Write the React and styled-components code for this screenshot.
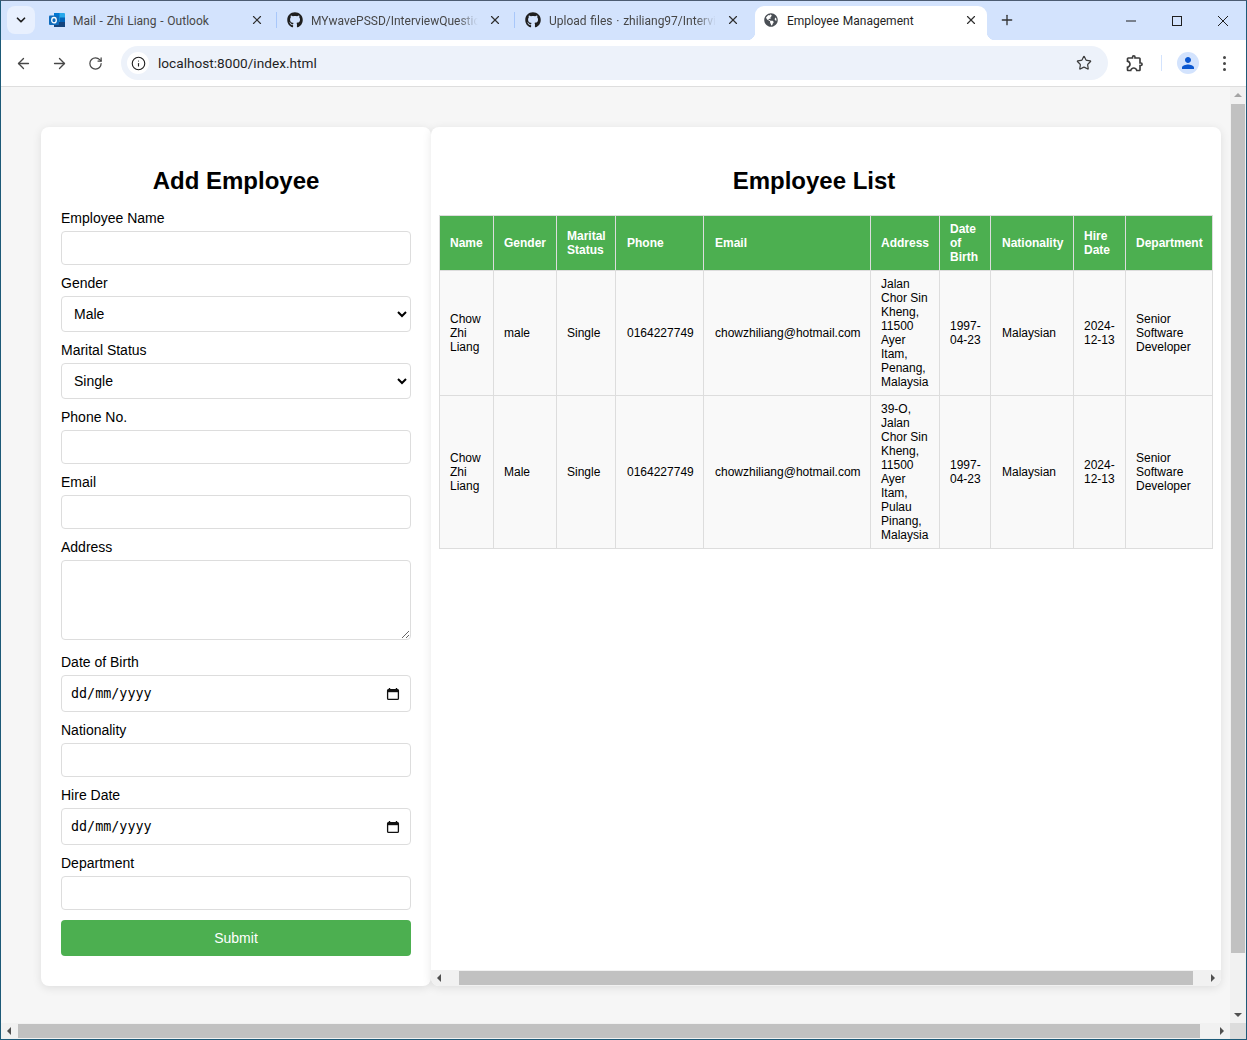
import React from 'react';
import styled, { createGlobalStyle } from 'styled-components';
import { ArrowLeft, ArrowRight, ChevronDown, Info, Plus, RotateCw, Star, X } from 'lucide-react';
import { FaGithub, FaGlobeAmericas } from 'react-icons/fa';
import { MdOutlineExtension, MdPerson } from 'react-icons/md';

const GlobalStyle = createGlobalStyle`
    html, body {
        margin: 0;
        padding: 0;
        overflow: hidden;
        background: #fff;
    }
    * {
        box-sizing: border-box;
    }
`;

const Window = styled.div`
    width: 1247px;
    height: 1040px;
    display: flex;
    flex-direction: column;
    border: 1px solid #1d5a78;
    border-top-color: #4c5c72;
    overflow: hidden;
    font-family: "Liberation Sans", Arial, sans-serif;
`;

/* browser chrome */
const TabStrip = styled.div`
    height: 39px;
    flex: none;
    display: flex;
    align-items: flex-end;
    padding-left: 6px;
    background: #d3e3fd;
    font-family: Roboto, "Noto Sans", sans-serif;
    font-size: 12px;
    word-spacing: 0.8px;
    color: #474747;
`;

const TabSearch = styled.div`
    width: 28px;
    height: 28px;
    margin: 0 6px 6px 0;
    flex: none;
    display: flex;
    align-items: center;
    justify-content: center;
    border-radius: 8px;
    background: #e8f0fe;
    color: #1f1f1f;
`;

const Tab = styled.div`
    position: relative;
    width: ${(p) => (p.$active ? '232px' : '238px')};
    margin-right: ${(p) => (p.$active ? '6px' : '0')};
    height: 34px;
    flex: none;
    display: flex;
    align-items: center;
    padding: 0 0 6px 8px;
    border-radius: 9px 9px 0 0;
    background: ${(p) => (p.$active ? '#fff' : 'transparent')};
    color: ${(p) => (p.$active ? '#1f1f1f' : '#474747')};
    &::before, &::after {
        content: ${(p) => (p.$active ? '""' : 'none')};
        position: absolute;
        bottom: 0;
        width: 8px;
        height: 8px;
    }
    &::before {
        left: -8px;
        background: radial-gradient(circle at 0 0, transparent 8px, #fff 8.5px);
    }
    &::after {
        right: -8px;
        background: radial-gradient(circle at 100% 0, transparent 8px, #fff 8.5px);
    }
`;

const TabSeparator = styled.span`
    position: absolute;
    right: 2px;
    top: 6px;
    width: 1px;
    height: 16px;
    background: #a8c7fa;
`;

const Favicon = styled.span`
    width: 16px;
    height: 16px;
    flex: none;
    display: flex;
    align-items: center;
    justify-content: center;
    color: ${(p) => p.$color || '#1f1f1f'};
`;

const TabTitle = styled.span`
    width: 184px;
    padding: 1px 0 0 8px;
    flex: none;
    white-space: nowrap;
    ${(p) => p.$fade && `
        mask-image: linear-gradient(to right, #000 84%, transparent 95%);
    `}
`;

const TabClose = styled.span`
    width: 16px;
    height: 16px;
    flex: none;
    display: flex;
    align-items: center;
    justify-content: center;
    color: #2f2f2f;
`;

const NewTab = styled.div`
    width: 28px;
    height: 28px;
    margin: 0 0 6px 0;
    flex: none;
    display: flex;
    align-items: center;
    justify-content: center;
    color: #333;
`;

const WindowControls = styled.div`
    margin-left: auto;
    height: 39px;
    display: flex;
    align-self: flex-start;
`;

const WindowControl = styled.div`
    width: 46px;
    display: flex;
    align-items: center;
    justify-content: center;
    color: #1f1f1f;
`;

const Toolbar = styled.div`
    height: 47px;
    flex: none;
    display: flex;
    align-items: center;
    padding: 0 0 0 4px;
    background: #fff;
    border-radius: 8px 8px 0 0;
    border-bottom: 1px solid #dedede;
    color: #474747;
`;

const NavButton = styled.div`
    width: 36px;
    height: 34px;
    flex: none;
    display: flex;
    align-items: center;
    justify-content: center;
`;

const AddressBar = styled.div`
    width: 987px;
    height: 34px;
    margin-left: 8px;
    flex: none;
    display: flex;
    align-items: center;
    padding: 0 8px 0 6px;
    border-radius: 17px;
    background: #edf2fa;
`;

const SiteInfo = styled.div`
    width: 22px;
    height: 22px;
    flex: none;
    display: flex;
    align-items: center;
    justify-content: center;
    border-radius: 50%;
    background: #fff;
    color: #1f1f1f;
`;

const Url = styled.span`
    margin-left: 9px;
    font-family: Roboto, "Noto Sans", sans-serif;
    font-size: 13.65px;
    color: #1f1f1f;
`;

const BarAction = styled.div`
    margin-left: auto;
    width: 32px;
    display: flex;
    align-items: center;
    justify-content: center;
    color: #3c3c3c;
`;

const ExtensionButton = styled(NavButton)`
    margin-left: 9px;
    color: #3c3c3c;
`;

const ToolbarDivider = styled.span`
    width: 1px;
    height: 16px;
    margin: 0 8px 0 8px;
    background: #d3e3fd;
`;

const Avatar = styled.div`
    width: 22px;
    height: 22px;
    margin-left: 7px;
    flex: none;
    display: flex;
    align-items: center;
    justify-content: center;
    border-radius: 50%;
    background: #d3e3fd;
    color: #0b57d0;
`;

const MenuDots = styled.div`
    margin-left: 24px;
    display: flex;
    flex-direction: column;
    gap: 3px;
    span {
        width: 3px;
        height: 3px;
        border-radius: 50%;
        background: #474747;
    }
`;

/* page */
const Viewport = styled.div`
    flex: 1;
    min-height: 0;
    display: grid;
    grid-template-columns: 1fr 16px;
    grid-template-rows: 1fr 16px;
    background: #f6f6f6;
`;

const Page = styled.div`
    min-height: 0;
    overflow: hidden;
    display: flex;
    padding: 40px 9px 37px 40px;
    color: #000;
`;

const FormCard = styled.div`
    width: 390px;
    flex: none;
    padding: 20px 20px 30px;
    background: #fff;
    border-radius: 8px;
    box-shadow: 0 2px 10px rgba(0, 0, 0, 0.1);
`;

const ListCard = styled.div`
    flex: 1;
    min-width: 0;
    display: flex;
    flex-direction: column;
    overflow: hidden;
    background: #fff;
    border-radius: 8px;
    box-shadow: 0 2px 10px rgba(0, 0, 0, 0.1);
`;

const ListBody = styled.div`
    flex: 1;
    min-height: 0;
    padding: 20px 8px 0;
`;

const Heading = styled.h2`
    margin: 20px 0 16px;
    font-size: 24px;
    line-height: 27px;
    font-weight: bold;
    text-align: center;
`;

const ListHeading = styled(Heading)`
    width: 750px;
    margin-bottom: 21px;
`;

const Field = styled.div`
    margin-bottom: 10px;
`;

const Label = styled.label`
    display: block;
    height: 16px;
    margin-bottom: 5px;
    font-size: 14px;
    line-height: 16px;
`;

const controlBase = `
    display: block;
    width: 100%;
    border: 1px solid #ddd;
    border-radius: 4px;
    background: #fff;
    font-family: "Liberation Sans", Arial, sans-serif;
    font-size: 14px;
    color: #000;
`;

const TextInput = styled.input`
    ${controlBase}
    height: 34px;
    padding: 8px;
`;

const Select = styled.select`
    ${controlBase}
    height: 36px;
    padding: 8px;
`;

const TextArea = styled.textarea`
    ${controlBase}
    height: 80px;
    margin-bottom: 14px;
    padding: 8px;
    resize: vertical;
`;

const DateBox = styled.div`
    ${controlBase}
    height: 37px;
    display: flex;
    align-items: center;
    justify-content: space-between;
    padding: 0 10px 0 9px;
    font-family: "DejaVu Sans Mono", "Liberation Mono", monospace;
    font-size: 13.4px;
`;

const SubmitButton = styled.button`
    display: block;
    width: 100%;
    height: 36px;
    border: none;
    border-radius: 4px;
    background: #4caf50;
    color: #fff;
    font-family: "Liberation Sans", Arial, sans-serif;
    font-size: 14px;
    cursor: pointer;
`;

const Table = styled.table`
    width: 773px;
    table-layout: fixed;
    border-collapse: collapse;
    font-size: 12px;
    line-height: 14px;
    th, td {
        padding: 6px 10px;
        border: 1px solid #ddd;
        text-align: left;
        vertical-align: middle;
    }
    th:nth-child(4), td:nth-child(4),
    th:nth-child(5), td:nth-child(5),
    th:nth-child(8), td:nth-child(8) {
        padding: 6px 9px 6px 11px;
    }
    th:nth-child(7), td:nth-child(7) {
        padding-right: 8px;
    }
    th {
        background: #4caf50;
        color: #fff;
        font-weight: bold;
    }
    td {
        background: #f9f9f9;
    }
`;

/* scrollbars */
const HTrack = styled.div`
    display: flex;
    height: 16px;
    flex: none;
    align-items: center;
    background: #f1f1f1;
`;

const VTrack = styled.div`
    display: flex;
    flex-direction: column;
    align-items: center;
    background: #f1f1f1;
`;

const ScrollArrow = styled.div`
    width: 16px;
    height: 16px;
    flex: none;
    display: flex;
    align-items: center;
    justify-content: center;
    color: #505050;
    ${(p) => p.$end && 'margin-left: auto;'}
    ${(p) => p.$bottom && 'margin-top: auto;'}
    &::before {
        content: "";
        border: 4px solid transparent;
        ${(p) => p.$dir === 'left' && 'border-right-color: currentColor; border-left-width: 0;'}
        ${(p) => p.$dir === 'right' && 'border-left-color: currentColor; border-right-width: 0;'}
        ${(p) => p.$dir === 'up' && 'border-bottom-color: #a3a3a3; border-top-width: 0;'}
        ${(p) => p.$dir === 'down' && 'border-top-color: currentColor; border-bottom-width: 0;'}
    }
`;

const HThumb = styled.div`
    height: 14px;
    flex: none;
    width: ${(p) => p.$width}px;
    margin-left: ${(p) => p.$offset}px;
    background: #c1c1c1;
`;

const VThumb = styled.div`
    width: 14px;
    height: 849px;
    margin-top: 1px;
    flex: none;
    background: #c1c1c1;
`;

const ScrollCorner = styled.div`
    background: #dcdcdc;
`;

const employees = [
    {
        name: 'Chow Zhi Liang',
        gender: 'male',
        address: 'Jalan Chor Sin Kheng, 11500 Ayer Itam, Penang, Malaysia',
    },
    {
        name: 'Chow Zhi Liang',
        gender: 'Male',
        address: '39-O, Jalan Chor Sin Kheng, 11500 Ayer Itam, Pulau Pinang, Malaysia',
    },
];

const columns = [
    ['Name', 54],
    ['Gender', 63],
    ['Marital Status', 59],
    ['Phone', 88],
    ['Email', 167],
    ['Address', 69],
    ['Date of Birth', 51],
    ['Nationality', 83],
    ['Hire Date', 52],
    ['Department', 87],
];

function OutlookIcon() {
    return (
        <svg width="16" height="16" viewBox="0 0 16 16">
            <rect x="5" y="1" width="11" height="14" rx="1" fill="#28a8ea" />
            <rect x="5" y="1" width="5.5" height="4.5" fill="#0078d4" />
            <rect x="10.5" y="5.5" width="5.5" height="4.5" fill="#0364b8" />
            <rect x="5" y="10" width="11" height="5" fill="#14447d" />
            <rect x="0" y="3.5" width="10" height="9.5" rx="1" fill="#0f6cbd" />
            <ellipse cx="5" cy="8.2" rx="2.3" ry="2.7" fill="none" stroke="#fff" strokeWidth="1.3" />
        </svg>
    );
}

function CalendarIcon() {
    return (
        <svg width="14" height="14" viewBox="0 0 14 14" fill="none">
            <path d="M3.5 1v1.5M10.5 1v1.5" stroke="#111" strokeWidth="1.4" />
            <rect x="1.6" y="2.6" width="10.8" height="9.8" rx="1" stroke="#111" strokeWidth="1.3" />
            <rect x="1.6" y="2.6" width="10.8" height="2.6" fill="#111" />
        </svg>
    );
}

function TabItem({ icon, title, active, fade, separator }) {
    return (
        <Tab $active={active}>
            {icon}
            <TabTitle $fade={fade}>{title}</TabTitle>
            <TabClose>
                <X size={14} strokeWidth={2} />
            </TabClose>
            {separator && <TabSeparator />}
        </Tab>
    );
}

function BrowserChrome() {
    return (
        <>
            <TabStrip>
                <TabSearch>
                    <ChevronDown size={14} strokeWidth={3} />
                </TabSearch>
                <TabItem
                    icon={<Favicon><OutlookIcon /></Favicon>}
                    title="Mail - Zhi Liang - Outlook"
                    separator
                />
                <TabItem
                    icon={<Favicon><FaGithub size={16} /></Favicon>}
                    title="MYwavePSSD/InterviewQuestio"
                    fade
                    separator
                />
                <TabItem
                    icon={<Favicon><FaGithub size={16} /></Favicon>}
                    title="Upload files · zhiliang97/Intervie"
                    fade
                />
                <TabItem
                    icon={<Favicon $color="#4a4f55"><FaGlobeAmericas size={14} /></Favicon>}
                    title="Employee Management"
                    active
                />
                <NewTab>
                    <Plus size={16} strokeWidth={2} />
                </NewTab>
                <WindowControls>
                    <WindowControl>
                        <svg width="12" height="12" viewBox="0 0 12 12"><path d="M1 6h10" stroke="currentColor" /></svg>
                    </WindowControl>
                    <WindowControl>
                        <svg width="12" height="12" viewBox="0 0 12 12"><rect x="1.5" y="1.5" width="9" height="9" fill="none" stroke="currentColor" /></svg>
                    </WindowControl>
                    <WindowControl>
                        <svg width="12" height="12" viewBox="0 0 12 12"><path d="M1 1l10 10M11 1L1 11" stroke="currentColor" /></svg>
                    </WindowControl>
                </WindowControls>
            </TabStrip>
            <Toolbar>
                <NavButton><ArrowLeft size={17} strokeWidth={1.9} /></NavButton>
                <NavButton><ArrowRight size={17} strokeWidth={1.9} /></NavButton>
                <NavButton><RotateCw size={15} strokeWidth={2} /></NavButton>
                <AddressBar>
                    <SiteInfo><Info size={15} strokeWidth={1.8} /></SiteInfo>
                    <Url>localhost:8000/index.html</Url>
                    <BarAction><Star size={16} strokeWidth={1.8} /></BarAction>
                </AddressBar>
                <ExtensionButton><MdOutlineExtension size={20} /></ExtensionButton>
                <ToolbarDivider />
                <Avatar><MdPerson size={18} /></Avatar>
                <MenuDots><span /><span /><span /></MenuDots>
            </Toolbar>
        </>
    );
}

function EmployeeForm() {
    return (
        <FormCard>
            <Heading>Add Employee</Heading>
            <Field>
                <Label>Employee Name</Label>
                <TextInput type="text" />
            </Field>
            <Field>
                <Label>Gender</Label>
                <Select defaultValue="Male">
                    <option>Male</option>
                    <option>Female</option>
                </Select>
            </Field>
            <Field>
                <Label>Marital Status</Label>
                <Select defaultValue="Single">
                    <option>Single</option>
                    <option>Married</option>
                </Select>
            </Field>
            <Field>
                <Label>Phone No.</Label>
                <TextInput type="text" />
            </Field>
            <Field>
                <Label>Email</Label>
                <TextInput type="text" />
            </Field>
            <Field>
                <Label>Address</Label>
                <TextArea />
            </Field>
            <Field>
                <Label>Date of Birth</Label>
                <DateBox>dd/mm/yyyy<CalendarIcon /></DateBox>
            </Field>
            <Field>
                <Label>Nationality</Label>
                <TextInput type="text" />
            </Field>
            <Field>
                <Label>Hire Date</Label>
                <DateBox>dd/mm/yyyy<CalendarIcon /></DateBox>
            </Field>
            <Field>
                <Label>Department</Label>
                <TextInput type="text" />
            </Field>
            <SubmitButton type="button">Submit</SubmitButton>
        </FormCard>
    );
}

function EmployeeList() {
    return (
        <ListCard>
            <ListBody>
                <ListHeading>Employee List</ListHeading>
                <Table>
                    <colgroup>
                        {columns.map(([title, width]) => (
                            <col key={title} style={{ width }} />
                        ))}
                    </colgroup>
                    <thead>
                        <tr>
                            {columns.map(([title]) => (
                                <th key={title}>{title}</th>
                            ))}
                        </tr>
                    </thead>
                    <tbody>
                        {employees.map((employee, index) => (
                            <tr key={index}>
                                <td>{employee.name}</td>
                                <td>{employee.gender}</td>
                                <td>Single</td>
                                <td>0164227749</td>
                                <td>chowzhiliang@hotmail.com</td>
                                <td>{employee.address}</td>
                                <td>1997-04-23</td>
                                <td>Malaysian</td>
                                <td>2024-12-13</td>
                                <td>Senior Software Developer</td>
                            </tr>
                        ))}
                    </tbody>
                </Table>
            </ListBody>
            <HTrack>
                <ScrollArrow $dir="left" />
                <HThumb $width={734} $offset={12} />
                <ScrollArrow $dir="right" $end />
            </HTrack>
        </ListCard>
    );
}

export default function App() {
    return (
        <>
            <GlobalStyle />
            <Window>
                <BrowserChrome />
                <Viewport>
                    <Page>
                        <EmployeeForm />
                        <EmployeeList />
                    </Page>
                    <VTrack>
                        <ScrollArrow $dir="up" />
                        <VThumb />
                        <ScrollArrow $dir="down" $bottom />
                    </VTrack>
                    <HTrack>
                        <ScrollArrow $dir="left" />
                        <HThumb $width={1182} $offset={1} />
                        <ScrollArrow $dir="right" $end />
                    </HTrack>
                    <ScrollCorner />
                </Viewport>
            </Window>
        </>
    );
}
